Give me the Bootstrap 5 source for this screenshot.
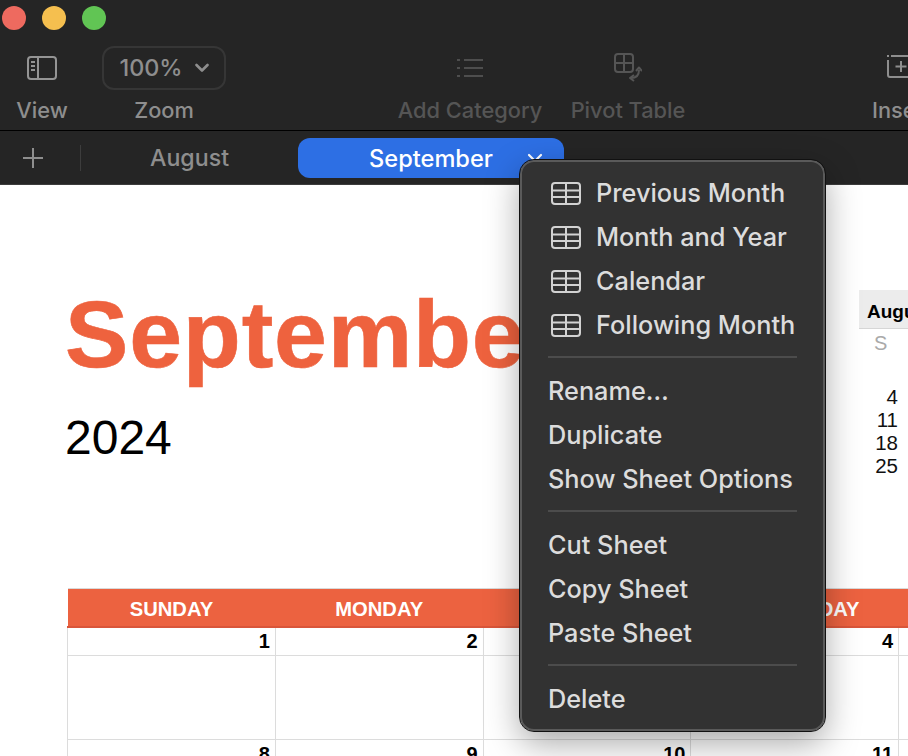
<!DOCTYPE html>
<html lang="en">
<head>
  <meta charset="UTF-8" />
  <meta name="viewport" content="width=device-width, initial-scale=1.0"/>
  <title>September - Numbers</title>
  <link rel="stylesheet" href="https://cdn.jsdelivr.net/npm/bootstrap@5.3.0/dist/css/bootstrap.min.css"/>
  <style>
    html, body { height: 100%; }
    body { width: 908px; height: 756px; overflow: hidden; background: #fff; font-family: Inter, "Liberation Sans", sans-serif; position: relative; }
    .app-top { background: #252525; height: 131px; border-bottom: 1px solid #000; overflow: hidden; }
    .lights { height: 46px; padding: 6px 0 0 2px; gap: 16px; }
    .light { width: 24px; height: 24px; border-radius: 50%; }
    .light-r { background: #ee6a5f; }
    .light-y { background: #f5bf4f; }
    .light-g { background: #61c554; }
    .tools { height: 84px; }
    .tool { flex: none; height: 84px; color: #8e8e8e; font-size: 21.8px; font-weight: 500; line-height: 28px; white-space: nowrap; }
    .tool-icon { height: 44px; }
    .tool-label { margin-top: 6px; }
    .tool-off { color: #555; }
    .t-view { width: 84px; }
    .t-zoom { width: 124px; margin-left: 18px; }
    .t-cat { width: 144px; margin-left: 172px; }
    .t-pivot { width: 114px; margin-left: 29px; }
    .t-pivot .tool-icon { padding-top: 7px; }
    .t-insert { width: 60px; margin-left: 187px; align-items: flex-start !important; }
    .t-insert .tool-icon { padding: 8px 0 0 14px; }
    .zoom-box { width: 124px; height: 44px; border: 2px solid #363636; border-radius: 12px; gap: 12px; color: #8e8e8e; font-size: 23.4px; }
    .tab-row { background: #252525; height: 54px; border-bottom: 1px solid #3c3c3c; }
    .tab-plus { width: 81px; height: 26px; border-right: 1px solid #3d3d3d; padding-right: 14px; }
    .tab-plain { width: 217px; color: #8e8e8e; font-size: 23.2px; font-weight: 500; text-align: center; padding-top: 2px; }
    .tab-active { width: 266px; height: 40px; background: #2d6fe4; border-radius: 12px; color: #fff; font-size: 23.6px; font-weight: 500; padding-top: 2px; position: relative; }
    .tab-chev { position: absolute; right: 20px; top: 15px; }
    .sheet { height: 571px; overflow: hidden; position: relative; }
    .sheet-head { height: 403px; padding-left: 65px; }
    .title-block { width: 794px; flex: none; padding-top: 93px; }
    .sheet-title { font-family: "Liberation Sans", Arial, sans-serif; font-weight: 700; font-size: 95px; line-height: 112px; color: #ee623e; letter-spacing: .8px; margin: 0; white-space: nowrap; -webkit-text-stroke: .6px #ee623e; }
    .sheet-year { font-family: "Liberation Sans", Arial, sans-serif; font-size: 48px; line-height: 56px; color: #000; margin-top: 20px; }
    .mini { font-family: "Liberation Sans", Arial, sans-serif; flex: none; width: 60px; padding-top: 105px; font-size: 20.5px; line-height: 23px; color: #111; }
    .mini-head { height: 39px; background: #ececec; border-bottom: 1px solid #d6d6d6; font-weight: 700; font-size: 19px; padding-left: 8px; line-height: 43px; overflow: hidden; white-space: nowrap; color: #000; }
    .mini-dow { color: #aaa; height: 56px; padding: 3px 0 0 15px; font-size: 20px; }
    .mini-num { text-align: right; width: 39px; }
    .cal { font-family: "Liberation Sans", Arial, sans-serif; margin-left: 67px; width: 1040px; table-layout: fixed; border-collapse: collapse; }
    .cal th { background: #ec6240; color: #fff; height: 38px; font-size: 20.2px; text-align: center; padding: 3px 0 0; border-top: 1px solid #d9d9d9; border-bottom: 2px solid #d9553a; }
    .cal td { border: 1px solid #dcdcdc; padding: 0 5px 0 0; text-align: right; font-weight: 700; font-size: 20px; line-height: 1; color: #000; height: 29px; }
    .cal td.blank { height: 84px; }
    .sheet-menu.dropdown-menu { position: absolute; left: 520px; top: 160px; width: 305px; height: 571px; margin: 0; padding: 9px 0 0; background: #323232; border: 2px solid #5a5a5a; outline: 1px solid #111; border-radius: 14px; box-shadow: 0 12px 34px rgba(0,0,0,.35); font-size: 25.3px; font-weight: 500; z-index: 10; }
    .sheet-menu .dropdown-item { height: 44px; line-height: 44px; padding: 0 0 0 26px; color: #dcdcdc; font-weight: 500; display: flex; align-items: center; gap: 15px; background: none; white-space: nowrap; }
    .sheet-menu .dropdown-divider { margin: 9px 26px 11px; border-top: 2px solid #4c4c4c; opacity: 1; }
    .tbl-ico { margin-left: 3px; flex: none; }
  </style>
</head>
<body>
  <div class="app-top">
    <div class="lights d-flex">
      <div class="light light-r"></div>
      <div class="light light-y"></div>
      <div class="light light-g"></div>
    </div>
    <div class="tools d-flex">
      <div class="tool t-view d-flex flex-column align-items-center">
        <div class="tool-icon d-flex align-items-center">
          <svg width="30" height="24" viewBox="0 0 30 24" fill="none" stroke="#949494" stroke-width="2"><rect x="1" y="1" width="28" height="22" rx="3"/><path d="M11 1v22M4 6h4M4 10h4M4 14h4"/></svg>
        </div>
        <div class="tool-label">View</div>
      </div>
      <div class="tool t-zoom d-flex flex-column align-items-center">
        <div class="zoom-box d-flex align-items-center justify-content-center">100%
          <svg width="14" height="10" viewBox="0 0 14 10" fill="none" stroke="#8e8e8e" stroke-width="2.6" stroke-linecap="round" stroke-linejoin="round"><path d="M1.500 2l5.500 5.500L12.500 2"/></svg>
        </div>
        <div class="tool-label">Zoom</div>
      </div>
      <div class="tool tool-off t-cat d-flex flex-column align-items-center">
        <div class="tool-icon d-flex align-items-center">
          <svg width="28" height="20" viewBox="0 0 28 20" fill="none" stroke="#4e4e4e" stroke-width="2"><path d="M8 2h19M8 10h19M8 18h19M1 2h3M1 10h3M1 18h3"/></svg>
        </div>
        <div class="tool-label">Add Category</div>
      </div>
      <div class="tool tool-off t-pivot d-flex flex-column align-items-center">
        <div class="tool-icon d-flex align-items-start">
          <svg width="28" height="30" viewBox="0 0 28 30" fill="none" stroke="#555" stroke-width="2"><rect x="1" y="1" width="18" height="18" rx="3"/><path d="M10 1v18M1 10h18"/><path d="M25 17c0 5-3 8-8 8"/><path d="M22 18l3-3.500 3 3.500M20 22l-4 3 4 3" stroke-linejoin="round"/></svg>
        </div>
        <div class="tool-label">Pivot Table</div>
      </div>
      <div class="tool t-insert d-flex flex-column">
        <div class="tool-icon d-flex align-items-start">
          <svg width="22" height="26" viewBox="0 0 22 26" fill="none" stroke="#8e8e8e" stroke-width="2"><path d="M2 6v15a2 2 0 0 0 2 2h18M5 2h17M1 2h2"/><path d="M15 7v11M9.500 12.500h11"/></svg>
        </div>
        <div class="tool-label">Insert</div>
      </div>
    </div>
  </div>
  <div class="tab-row d-flex align-items-center">
    <div class="tab-plus d-flex align-items-center justify-content-center">
      <svg width="22" height="22" viewBox="0 0 22 22" fill="none" stroke="#8e8e8e" stroke-width="2"><path d="M11 1v20M1 11h20"/></svg>
    </div>
    <div class="tab-plain">August</div>
    <div class="tab-active d-flex align-items-center justify-content-center">September
      <svg class="tab-chev" width="18" height="12" viewBox="0 0 18 12" fill="none" stroke="#fff" stroke-width="2.200" stroke-linecap="round" stroke-linejoin="round"><path d="M3 2l6 6 6-6"/></svg>
    </div>
  </div>
  <div class="sheet">
    <div class="sheet-head d-flex">
      <div class="title-block">
        <h1 class="sheet-title">September</h1>
        <div class="sheet-year">2024</div>
      </div>
      <div class="mini">
        <div class="mini-head">August</div>
        <div class="mini-dow">S</div>
        <div class="mini-num">4</div>
        <div class="mini-num">11</div>
        <div class="mini-num">18</div>
        <div class="mini-num">25</div>
      </div>
    </div>
    <table class="cal">
      <thead>
        <tr><th>SUNDAY</th><th>MONDAY</th><th>TUESDAY</th><th>WEDNESDAY</th><th>THURSDAY</th></tr>
      </thead>
      <tbody>
        <tr><td>1</td><td>2</td><td>3</td><td>4</td><td>5</td></tr>
        <tr><td class="blank"></td><td class="blank"></td><td class="blank"></td><td class="blank"></td><td class="blank"></td></tr>
        <tr><td>8</td><td>9</td><td>10</td><td>11</td><td>12</td></tr>
      </tbody>
    </table>
  </div>

  <div class="dropdown-menu show sheet-menu" id="sheetMenu"></div>

  <script>
    const tableIcon = `<svg class="tbl-ico" width="30" height="23" viewBox="0 0 30 23" fill="none" stroke="#d2d2d2" stroke-width="2"><rect x="1" y="1" width="28" height="21" rx="3"/><path d="M1 8.500h28M1 15h28M15 1v21"/></svg>`;
    const groups = [
      ["Previous Month", "Month and Year", "Calendar", "Following Month"],
      ["Rename…", "Duplicate", "Show Sheet Options"],
      ["Cut Sheet", "Copy Sheet", "Paste Sheet"],
      ["Delete"]
    ];
    document.getElementById("sheetMenu").innerHTML = groups.map((g, i) =>
      g.map(t => `<a class="dropdown-item" href="#">${i === 0 ? tableIcon : ""}<span>${t}</span></a>`).join("")
    ).join(`<hr class="dropdown-divider">`);
  </script>
  <script src="https://cdn.jsdelivr.net/npm/bootstrap@5.3.0/dist/js/bootstrap.bundle.min.js"></script>
</body>
</html>
